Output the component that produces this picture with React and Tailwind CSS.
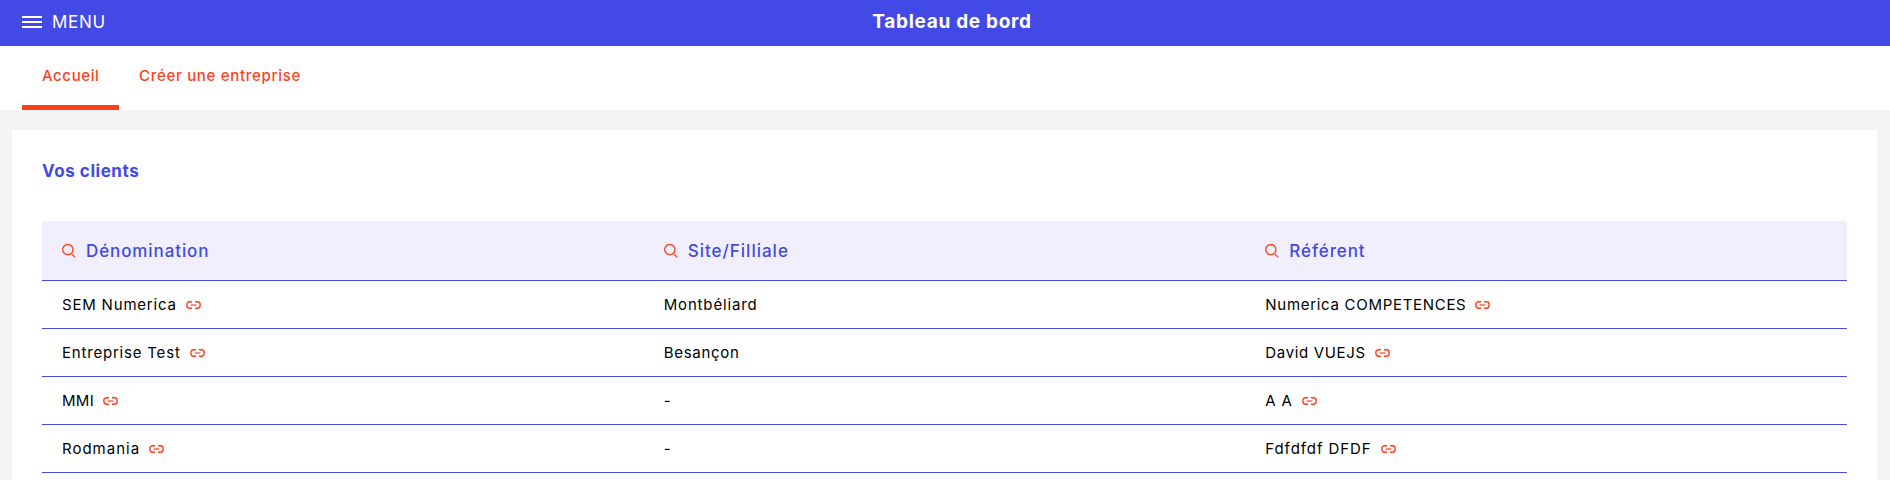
const columns = [
  { label: 'Dénomination', tracking: 'tracking-[0.9px]' },
  { label: 'Site/Filliale', tracking: 'tracking-[1px]' },
  { label: 'Référent', tracking: 'tracking-[0.9px]' },
];

const rows = [
  [
    { text: 'SEM Numerica', link: true, tracking: 'tracking-[0.8px]' },
    { text: 'Montbéliard', tracking: 'tracking-[0.85px]' },
    { text: 'Numerica COMPETENCES', link: true, tracking: 'tracking-[0.7px]' },
  ],
  [
    { text: 'Entreprise Test', link: true, tracking: 'tracking-[0.8px]' },
    { text: 'Besançon', tracking: 'tracking-[0.72px]' },
    { text: 'David VUEJS', link: true, tracking: 'tracking-[0.65px]' },
  ],
  [
    { text: 'MMI', link: true, tracking: 'tracking-[0.3px]' },
    { text: '-' },
    { text: 'A A', link: true, tracking: 'tracking-[0.8px]' },
  ],
  [
    { text: 'Rodmania', link: true, tracking: 'tracking-[1px]' },
    { text: '-' },
    { text: 'Fdfdfdf DFDF', link: true, tracking: 'tracking-[0.92px]' },
  ],
];

function SearchIcon() {
  return (
    <svg className="size-[14px] shrink-0" viewBox="0 0 14 14" fill="none" stroke="#ff3f1a" strokeWidth="1.3">
      <circle cx="5.8" cy="5.6" r="5.1" />
      <path d="M9.9 10.1 L13.2 13.4" />
    </svg>
  );
}

function LinkIcon() {
  return (
    <svg className="ml-[9px] h-2 w-[15px] shrink-0" viewBox="0 0 15 8" fill="none" stroke="#ff3f1a" strokeWidth="1.4">
      <path d="M6 0.8 H3.6 Q0.9 0.8 0.9 3.2 V4.8 Q0.9 7.2 3.6 7.2 H6 M9 0.8 H11.4 Q14.1 0.8 14.1 3.2 V4.8 Q14.1 7.2 11.4 7.2 H9" />
      <path d="M4.7 4 H10.3" strokeWidth="1.2" />
    </svg>
  );
}

export default function App() {
  return (
    <div className="h-[480px] overflow-hidden bg-[#f3f4f6] font-['Inter',sans-serif]">
      <header className="grid h-[46px] grid-cols-3 items-center bg-[#4349e4] px-[22px] pb-0.5 text-white">
        <button className="flex items-center gap-2.5">
          <span className="flex w-5 flex-col gap-[3px]">
            <span className="h-0.5 bg-white" />
            <span className="h-0.5 bg-white" />
            <span className="h-0.5 bg-white" />
          </span>
          <span className="text-[17px] leading-5 tracking-[0.7px]">MENU</span>
        </button>
        <h1 className="pl-3.5 text-center text-[19px] leading-6 font-bold tracking-[0.7px]">Tableau de bord</h1>
      </header>
      <nav className="flex h-16 bg-white pl-[22px] text-[15px] font-medium text-[#ff3f1a]">
        <a className="flex h-16 w-[97px] items-center border-b-[5px] border-[#ff3f1a] pt-px pl-5 tracking-[0.6px]">
          Accueil
        </a>
        <a className="flex h-16 items-center border-b-[5px] border-transparent pt-px pl-5 tracking-[0.7px]">
          Créer une entreprise
        </a>
      </nav>
      <main className="mx-3 mr-[13px] mt-5 h-[600px] bg-white px-[30px] pt-[29px]">
        <h2 className="h-[62px] text-[17px] leading-6 font-bold tracking-[0.55px] text-[#4349e4]">Vos clients</h2>
        <section>
          <div className="grid h-[60px] grid-cols-3 border-b border-[#4349e4] bg-[#f1effe]">
            {columns.map((c) => (
              <div key={c.label} className="flex items-center gap-2.5 pt-px pl-5">
                <SearchIcon />
                <span className={`pt-0.5 text-[17px] font-medium text-[#4349e4] ${c.tracking}`}>{c.label}</span>
              </div>
            ))}
          </div>
          {rows.map((row, i) => (
            <div key={i} className="grid h-12 grid-cols-3 border-b border-[#4349e4]">
              {row.map((cell, j) => (
                <div key={j} className="flex items-center pt-px pl-5 text-[15px] text-black">
                  <span className={cell.tracking}>{cell.text}</span>
                  {cell.link && <LinkIcon />}
                </div>
              ))}
            </div>
          ))}
        </section>
      </main>
    </div>
  );
}
